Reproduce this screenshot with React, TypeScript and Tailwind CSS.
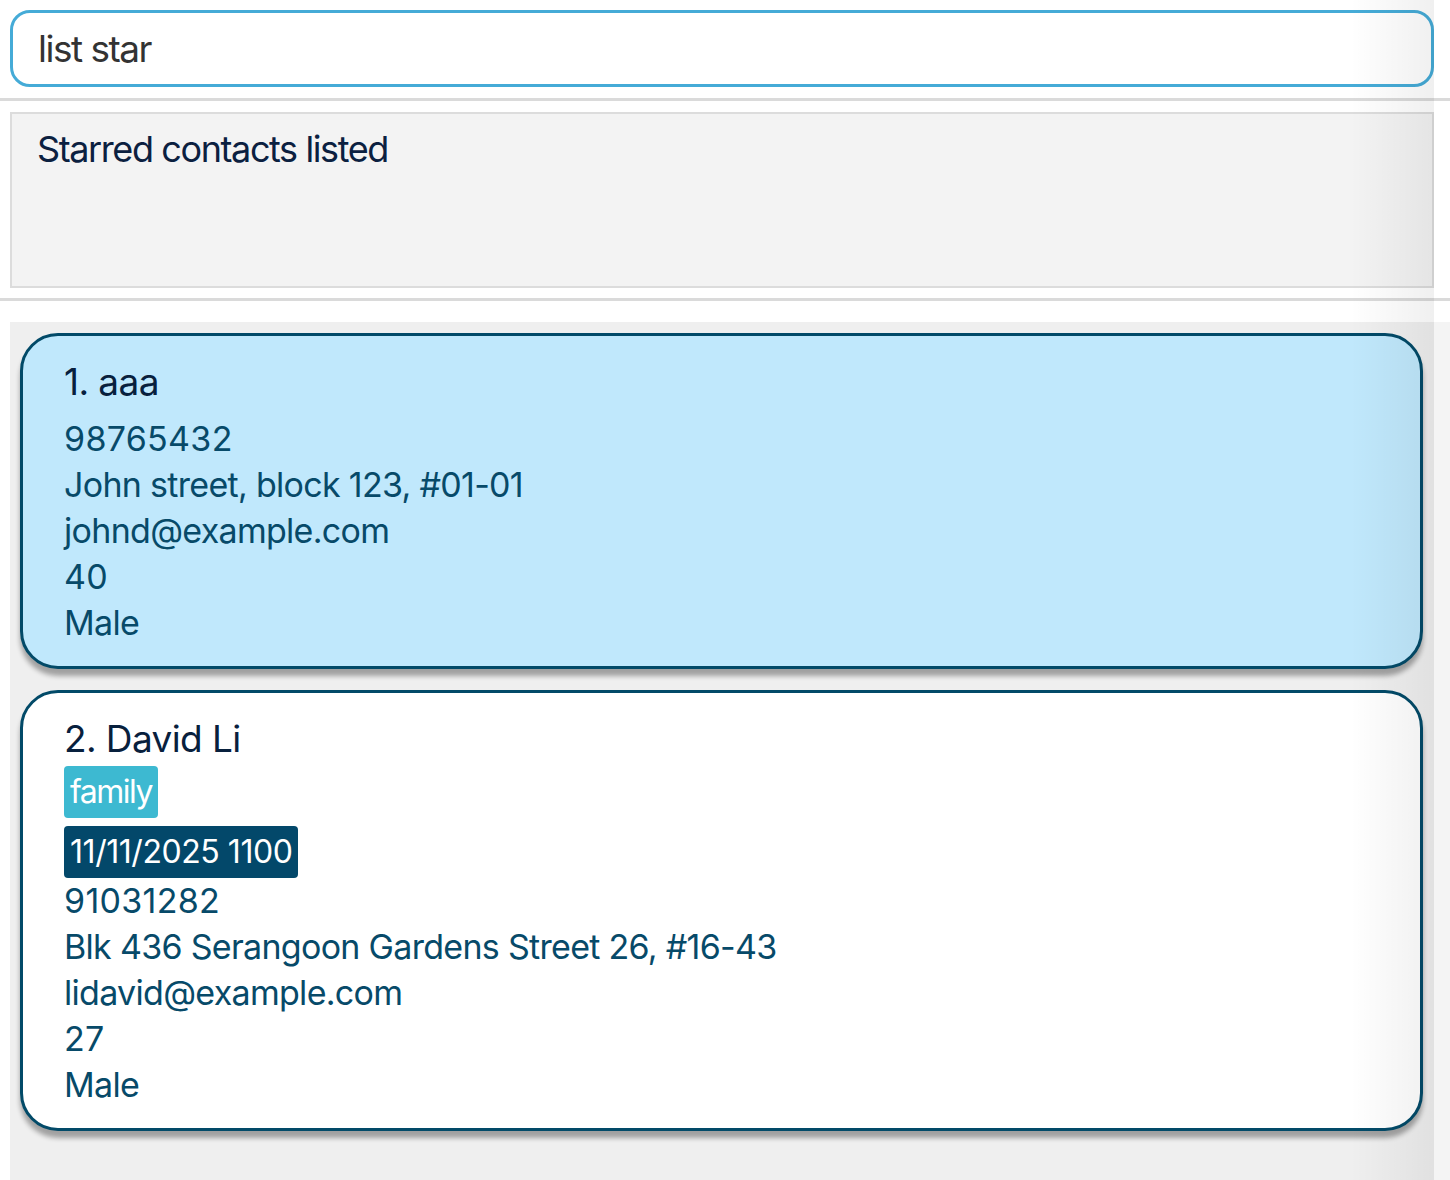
import React from 'react';

type Person = {
  name: string;
  tags: { label: string; kind: 'tag' | 'date' }[];
  details: string[];
  selected?: boolean;
};

const people: Person[] = [
  {
    name: '1. aaa',
    tags: [],
    details: ['98765432', 'John street, block 123, #01-01', 'johnd@example.com', '40', 'Male'],
    selected: true,
  },
  {
    name: '2. David Li',
    tags: [
      { label: 'family', kind: 'tag' },
      { label: '11/11/2025 1100', kind: 'date' },
    ],
    details: ['91031282', 'Blk 436 Serangoon Gardens Street 26, #16-43', 'lidavid@example.com', '27', 'Male'],
  },
];

function PersonCard({ p }: { p: Person }) {
  return (
    <div
      className={`rounded-[38px] border-[3px] border-[#024a68] pl-[41px] pt-[23px] pb-[20px] shadow-[0_7px_5px_rgba(0,0,0,0.33)] ${
        p.selected ? 'bg-[#c0e8fc]' : 'bg-white'
      }`}
    >
      <div
        className={`text-[37px] leading-[46px] tracking-[-0.6px] text-[#08203d] ${
          p.tags.length ? 'mb-[4px]' : 'mb-[11px]'
        }`}
      >
        {p.name}
      </div>
      {p.tags.length > 0 && (
        <div className="flex flex-col items-start gap-[8px]">
          {p.tags.map((t) => (
            <span
              key={t.label}
              className={`rounded-[4px] px-[6px] text-[32px] leading-[52px] text-white ${
                t.kind === 'tag' ? 'bg-[#3db9d1] tracking-[-1.5px]' : 'bg-[#03486a] tracking-[-0.45px]'
              }`}
            >
              {t.label}
            </span>
          ))}
        </div>
      )}
      {p.details.map((d, i) => (
        <div
          key={i}
          className={`text-[34px] leading-[46px] text-[#074a69] ${
            /^\d+$/.test(d) ? 'tracking-[0.3px]' : 'tracking-[-0.7px]'
          }`}
        >
          {d}
        </div>
      ))}
    </div>
  );
}

export default function App() {
  return (
    <div
      className="relative w-[1450px] h-[1180px] overflow-hidden bg-white"
      style={{ fontFamily: 'Inter, "Noto Sans", sans-serif' }}
    >
      <div className="pl-[10px] pr-[16px] pt-[10px]">
        <div className="h-[77px] rounded-[20px] border-[3px] border-[#45abd7] bg-white pl-[25px] text-[37px] leading-[71px] tracking-[-1.5px] text-[#333]">
          list star
        </div>
      </div>
      <div className="mt-[11px] h-[3px] bg-[#dadada]" />
      <div className="pl-[10px] pr-[16px] pt-[11px]">
        <div className="h-[176px] border-2 border-[#dcdcdc] bg-[#f3f3f3] pl-[25px] pt-[11px] text-[36px] leading-[48px] tracking-[-1.4px] text-[#0b2040]">
          Starred contacts listed
        </div>
      </div>
      <div className="mt-[10px] h-[3px] bg-[#dadada]" />
      <div className="mt-[21px] flex h-[858px]">
        <div className="ml-[10px] w-[1424px] bg-[#efefef] pl-[10px] pr-[11px] pt-[11px]">
          <div className="flex flex-col gap-[21px]">
            {people.map((p) => (
              <PersonCard key={p.name} p={p} />
            ))}
          </div>
        </div>
        <div className="flex-1 bg-[#f4f4f4]" />
      </div>
      <div className="pointer-events-none absolute top-0 bottom-0 left-[1350px] w-[84px] bg-gradient-to-r from-transparent to-black/[0.06]" />
    </div>
  );
}
